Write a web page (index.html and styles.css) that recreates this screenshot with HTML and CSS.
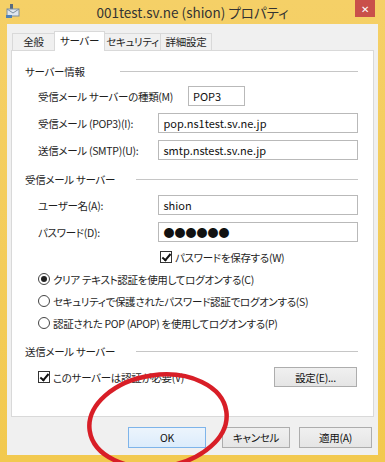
FILE: index.html
```html
<!DOCTYPE html>
<html lang="ja">
<head>
    <meta charset="UTF-8">
    <meta name="viewport" content="width=device-width, initial-scale=1.0">
    <title>001test.sv.ne (shion) プロパティ</title>
    <link rel="stylesheet" href="styles.css">
</head>
<body>
    <div class="window">
        <div class="titlebar">
            <svg class="app-icon" width="16" height="16" viewBox="0 0 16 16">
                <rect x="5" y="1" width="3" height="6" fill="#5a6b7d"/>
                <rect x="2" y="6" width="12" height="7" fill="#dfe6ee" stroke="#7d8ea0"/>
                <path d="M2 6 L8 10 L14 6" fill="none" stroke="#7d8ea0"/>
                <rect x="1" y="12" width="6" height="3" fill="#4e7fb5"/>
            </svg>
            <div class="title">001test.sv.ne (shion) プロパティ</div>
            <div class="close">✕</div>
        </div>

        <div class="client">
            <div class="tabs">
                <div class="tab tab-general">全般</div>
                <div class="tab tab-server active">サーバー</div>
                <div class="tab tab-security">セキュリティ</div>
                <div class="tab tab-detail">詳細設定</div>
            </div>

            <div class="panel">
                <!-- サーバー情報 -->
                <div class="group">
                    <div class="group-head">
                        <span class="group-label narrow">サーバー情報</span>
                        <span class="rule"></span>
                    </div>
                    <div class="row row-type">
                        <label class="field-label wide">受信メール サーバーの種類(M)</label>
                        <div class="input input-short">POP3</div>
                    </div>
                    <div class="row">
                        <label class="field-label">受信メール (POP3)(I):</label>
                        <div class="input">pop.ns1test.sv.ne.jp</div>
                    </div>
                    <div class="row">
                        <label class="field-label">送信メール (SMTP)(U):</label>
                        <div class="input">smtp.nstest.sv.ne.jp</div>
                    </div>
                </div>

                <!-- 受信メール サーバー -->
                <div class="group group-incoming">
                    <div class="group-head">
                        <span class="group-label">受信メール サーバー</span>
                        <span class="rule"></span>
                    </div>
                    <div class="row">
                        <label class="field-label">ユーザー名(A):</label>
                        <div class="input">shion</div>
                    </div>
                    <div class="row">
                        <label class="field-label">パスワード(D):</label>
                        <div class="input password">●●●●●●</div>
                    </div>
                    <div class="option save-pass">
                        <span class="checkbox checked"></span>
                        <span>パスワードを保存する(W)</span>
                    </div>
                    <div class="option">
                        <span class="radio selected"></span>
                        <span>クリア テキスト認証を使用してログオンする(C)</span>
                    </div>
                    <div class="option">
                        <span class="radio"></span>
                        <span>セキュリティで保護されたパスワード認証でログオンする(S)</span>
                    </div>
                    <div class="option">
                        <span class="radio"></span>
                        <span>認証された POP (APOP) を使用してログオンする(P)</span>
                    </div>
                </div>

                <!-- 送信メール サーバー -->
                <div class="group group-outgoing">
                    <div class="group-head">
                        <span class="group-label">送信メール サーバー</span>
                        <span class="rule"></span>
                    </div>
                    <div class="auth-row">
                        <div class="option">
                            <span class="checkbox checked"></span>
                            <span>このサーバーは認証が必要(V)</span>
                        </div>
                        <button class="btn btn-settings">設定(E)...</button>
                    </div>
                </div>
            </div>

            <div class="buttons">
                <button class="btn btn-ok">OK</button>
                <button class="btn btn-cancel">キャンセル</button>
                <button class="btn btn-apply">適用(A)</button>
            </div>
        </div>
    </div>

    <svg class="marker" width="385" height="462" viewBox="0 0 385 462">
        <ellipse cx="158" cy="421" rx="69" ry="46" transform="rotate(-8 158 421)"
                 fill="none" stroke="#d81e27" stroke-width="4.5"/>
    </svg>
</body>
</html>
```

FILE: styles.css
```css
* {
    margin: 0;
    padding: 0;
    box-sizing: border-box;
}

body {
    width: 385px;
    height: 462px;
    overflow: hidden;
    background: #f3cb55;
    font-family: "Noto Sans CJK JP", "Noto Sans", sans-serif;
    font-size: 10.5px;
    letter-spacing: -0.3px;
    font-feature-settings: "palt";
    color: #1e1e1e;
    position: relative;
}

.window {
    height: 462px;
    display: flex;
    flex-direction: column;
    padding: 0 7px 7px;
    background: linear-gradient(#f5d067, #f2c94f);
}

/* title bar */
.titlebar {
    height: 24px;
    display: flex;
    align-items: center;
    position: relative;
}

.app-icon {
    position: absolute;
    left: -2px;
    top: 3px;
}

.title {
    flex: 1;
    text-align: center;
    font-size: 13.5px;
    letter-spacing: 0;
    color: #333;
    margin-left: -7px;
    margin-right: -7px;
    line-height: 24px;
}

.close {
    position: absolute;
    right: 3px;
    top: 0;
    width: 20px;
    height: 17px;
    background: #c9504a;
    color: #fff;
    font-size: 10px;
    line-height: 17px;
    text-align: center;
}

/* client area */
.client {
    flex: 1;
    background: #f0f0f0;
    padding: 7px 4px 0;
    display: flex;
    flex-direction: column;
}

.tabs {
    display: flex;
    align-items: flex-end;
    padding-left: 1px;
    height: 19px;
    position: relative;
    z-index: 1;
}

.tab {
    height: 17px;
    border: 1px solid #d9d9d9;
    border-bottom: none;
    background: #f0f0f0;
    text-align: center;
    line-height: 15px;
    margin-right: -1px;
    white-space: nowrap;
}

.tab-general { width: 43px; }
.tab-server { width: 51px; }
.tab-security { width: 57px; }
.tab-detail { width: 52px; }

.tab.active {
    height: 20px;
    background: #fff;
    margin-bottom: -1px;
    line-height: 17px;
    position: relative;
}

.panel {
    height: 367px;
    background: #fff;
    border: 1px solid #d9d9d9;
    padding: 12px 15px 0 13px;
}

/* groups */
.group-head {
    display: flex;
    align-items: center;
    height: 16px;
}

.group-label {
    width: 111px;
    white-space: nowrap;
}

.group-label.narrow {
    width: 95px;
}

.rule {
    flex: 1;
    height: 1px;
    background: #c6c6c6;
}

.row {
    display: flex;
    align-items: center;
    margin-top: 7px;
    padding-left: 13px;
}

.field-label {
    width: 122px;
    white-space: nowrap;
}

.field-label.wide {
    width: 150px;
}

.input {
    width: 202px;
    height: 20px;
    border: 1px solid #b9b9b9;
    padding: 0 4px;
    font-size: 11px;
    letter-spacing: 0;
    line-height: 18px;
    color: #111;
}

.input-short {
    width: 57px;
}

.password {
    line-height: 18px;
}

.group-incoming {
    margin-top: 11px;
}

.group-incoming .group-head + .row {
    margin-top: 8px;
}

.option {
    display: flex;
    align-items: center;
    height: 22px;
    padding-left: 13px;
    white-space: nowrap;
}

.option.save-pass {
    padding-left: 135px;
    margin-top: 4px;
}

.checkbox,
.radio {
    width: 12px;
    height: 12px;
    border: 1px solid #333;
    background: #fff;
    margin-right: 3px;
    position: relative;
    flex-shrink: 0;
}

.radio {
    border-radius: 50%;
    border-color: #444;
}

.radio.selected:after {
    content: "";
    position: absolute;
    left: 2px;
    top: 2px;
    width: 6px;
    height: 6px;
    border-radius: 50%;
    background: #222;
}

.checkbox.checked:after {
    content: "";
    position: absolute;
    left: 3px;
    top: 0px;
    width: 3px;
    height: 7px;
    border: solid #111;
    border-width: 0 2px 2px 0;
    transform: rotate(40deg);
}

.group-outgoing {
    margin-top: 9px;
}

.auth-row {
    display: flex;
    align-items: center;
    justify-content: space-between;
    margin-top: 7px;
    padding-right: 1px;
}

/* buttons */
.btn {
    font-family: inherit;
    font-size: 10.5px;
    letter-spacing: -0.3px;
    font-feature-settings: "palt";
    color: #111;
    height: 21px;
    border: 1px solid #adadad;
    background: linear-gradient(#f0f0f0, #e5e5e5);
}

.btn-settings {
    width: 83px;
    height: 20px;
}

.buttons {
    display: flex;
    justify-content: flex-end;
    margin-top: 10px;
    padding-right: 2px;
}

.btn-ok {
    width: 78px;
    background: linear-gradient(#ecf4fc, #dcecfc);
    border-color: #7eb4ea;
    margin-right: 16px;
}

.btn-cancel {
    width: 68px;
    margin-right: 9px;
}

.btn-apply {
    width: 73px;
}

.marker {
    position: absolute;
    left: 0;
    top: 0;
    pointer-events: none;
}
```
